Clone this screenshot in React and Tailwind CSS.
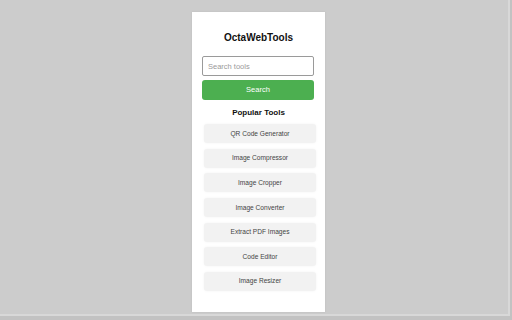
import React from 'react'

const tools = [
  'QR Code Generator',
  'Image Compressor',
  'Image Cropper',
  'Image Converter',
  'Extract PDF Images',
  'Code Editor',
  'Image Resizer',
]

export default function App() {
  return (
    <div className="w-[512px] h-[320px] bg-[#c2c2c2] overflow-hidden" style={{ fontFamily: '"Liberation Sans", Arial, sans-serif' }}>
      <div className="w-[510px] h-[316px] bg-[#cccccc] border-r-2 border-b-2 border-[#d8d8d8] pl-[192px] pt-[12px]">
        {/* Popup */}
        <div className="w-[133px] h-[300px] bg-white flex flex-col shadow-[0_0_2px_rgba(0,0,0,0.08)]">
          <h1 className="mt-[20px] text-[10px] leading-[12px] font-bold text-[#111] text-center m-0">OctaWebTools</h1>

          <input
            placeholder="Search tools"
            className="mt-[12px] ml-[10px] w-[112px] h-[20px] border border-[#9a9a9a] rounded-[2px] px-[5px] text-[7.5px] text-[#333] placeholder:text-[#9a9a9a] outline-none"
          />
          <button className="mt-[4px] ml-[10px] w-[112px] h-[20px] bg-[#4caf50] text-white text-[7.5px] rounded-[3px] border-none">
            Search
          </button>

          <h2 className="mt-[8px] text-[8px] leading-[10px] font-bold text-[#111] text-center m-0">Popular Tools</h2>

          <div className="mt-[6px] ml-[12px] w-[112px] flex flex-col gap-[5.67px]">
            {tools.map((t) => (
              <div
                key={t}
                className="h-[19px] bg-[#f2f2f2] rounded-[3px] flex items-center justify-center text-[6.6px] text-[#444] shadow-[0_0_3px_rgba(0,0,0,0.05)]"
              >
                {t}
              </div>
            ))}
          </div>
        </div>
      </div>
    </div>
  )
}
